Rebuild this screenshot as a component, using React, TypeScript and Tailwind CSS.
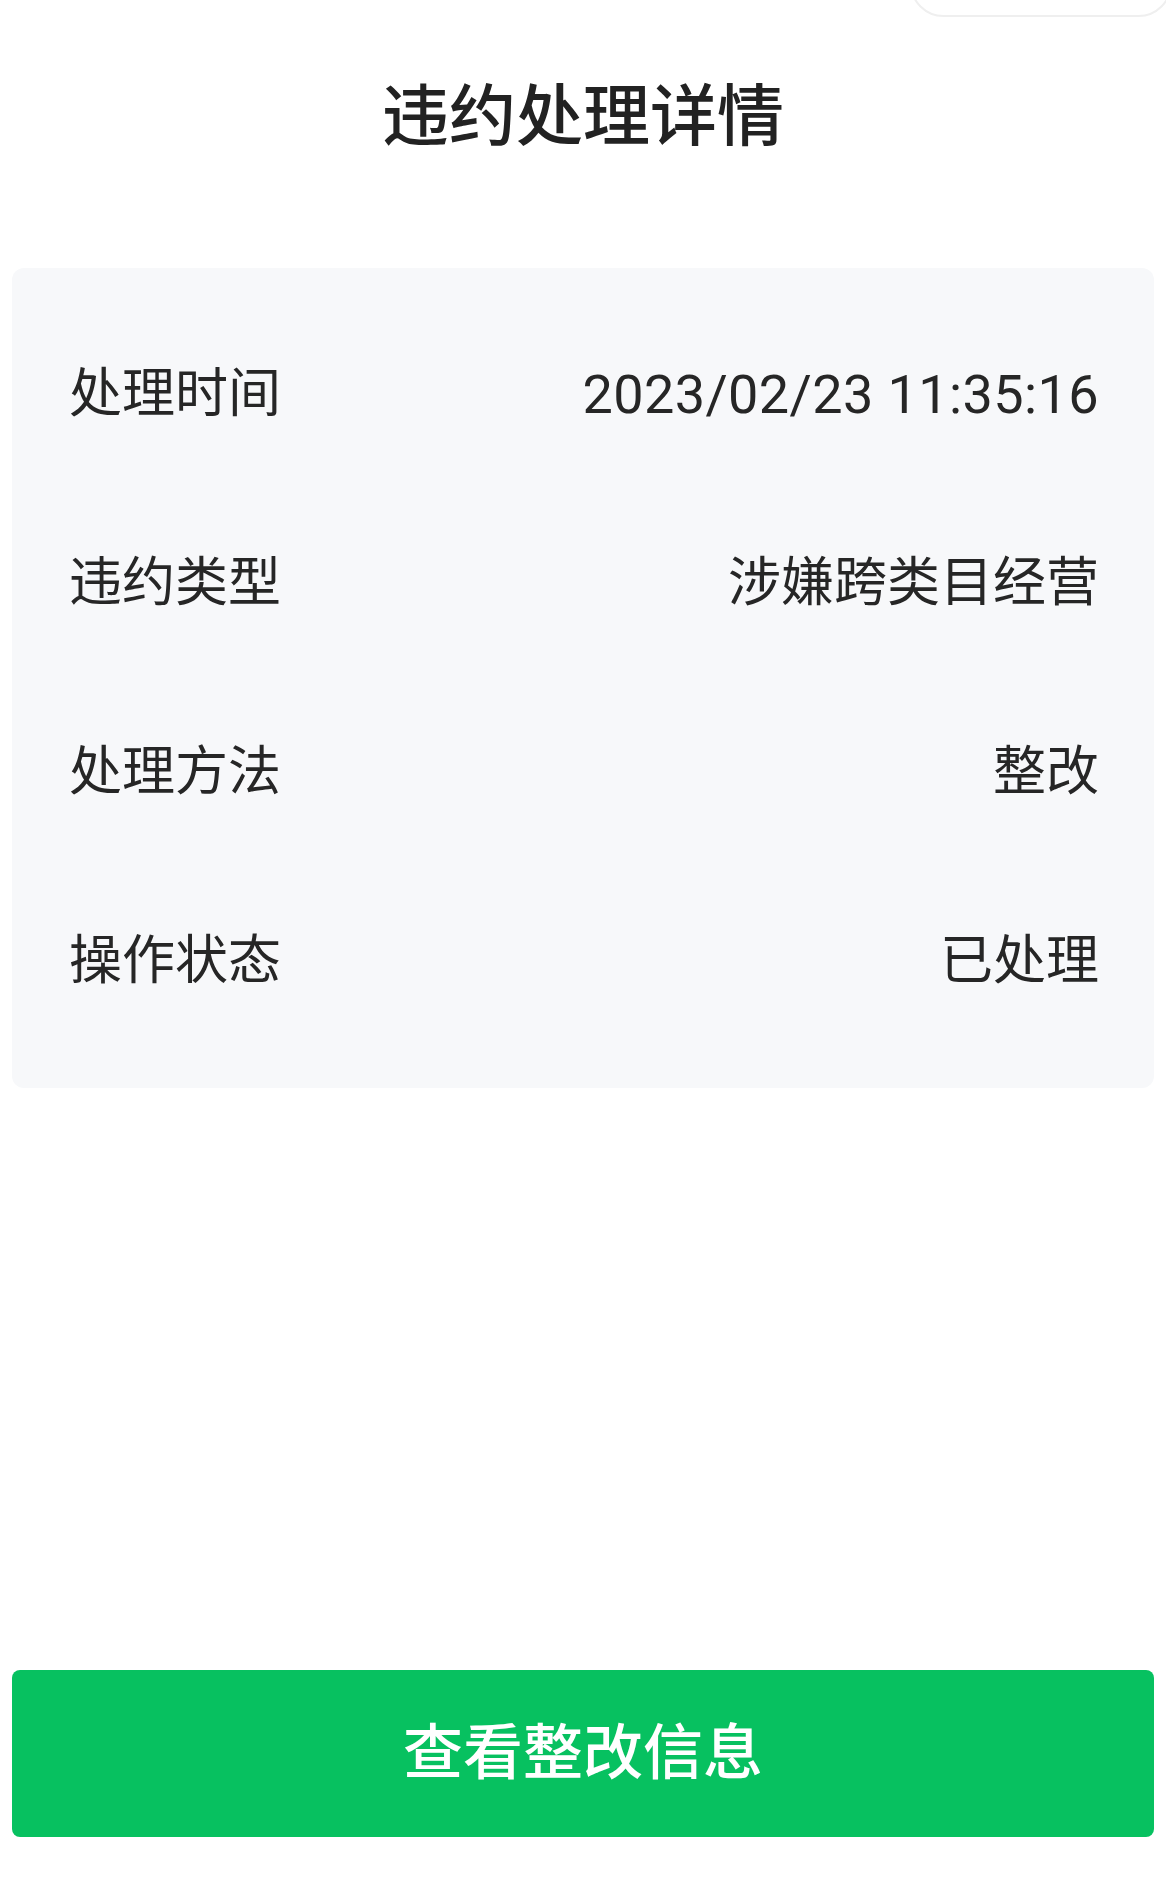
const rows = [
  { label: "处理时间", value: "2023/02/23 11:35:16" },
  { label: "违约类型", value: "涉嫌跨类目经营" },
  { label: "处理方法", value: "整改" },
  { label: "操作状态", value: "已处理" },
];

export default function App() {
  return (
    <div
      className="relative min-h-[1898px] w-full overflow-hidden bg-white px-[12px]"
      style={{ fontFamily: '"Roboto", "Noto Sans CJK SC", sans-serif' }}
    >
      {/* mini-program capsule edge */}
      <div className="absolute right-[-6px] top-[-50px] h-[67px] w-[262px] rounded-[34px] border-2 border-[#efefef]" />

      <h1 className="pt-[84px] text-center text-[67px] font-medium leading-none text-[#222222]">
        违约处理详情
      </h1>

      <div className="mt-[117px] rounded-[12px] bg-[#f7f8fa] pl-[57px] pr-[55px] py-[32px]">
        {rows.map((row, i) => (
          <div key={row.label} className="flex h-[189px] items-center justify-between">
            <span className="text-[53px] leading-none text-[#262626]">{row.label}</span>
            <span
              className={
                i === 0
                  ? "text-[54px] leading-none tracking-[0.4px] text-[#262626]"
                  : "text-[53px] leading-none text-[#262626]"
              }
            >
              {row.value}
            </span>
          </div>
        ))}
      </div>

      <button className="mt-[582px] flex h-[167px] w-full items-center justify-center rounded-[8px] bg-[#07c160] text-[60px] font-medium text-white">
        查看整改信息
      </button>
    </div>
  );
}
